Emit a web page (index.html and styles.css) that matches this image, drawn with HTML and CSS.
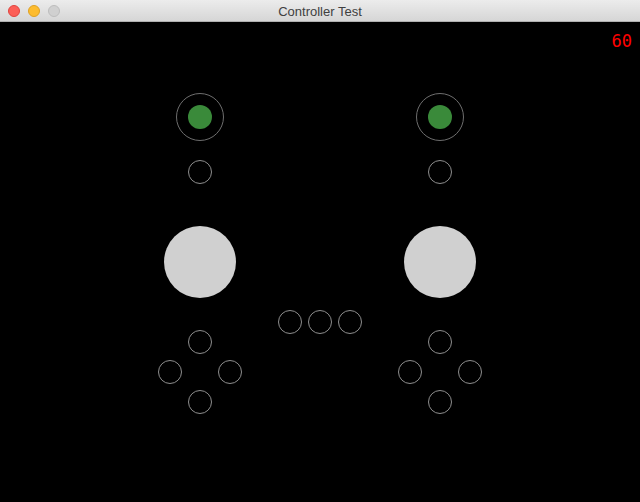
FILE: index.html
```html
<!DOCTYPE html>
<html>
<head>
<meta charset="utf-8">
<link rel="stylesheet" href="styles.css">
</head>
<body>
<div class="window">
  <div class="titlebar">
    <div class="lights">
      <span class="light red"></span>
      <span class="light yellow"></span>
      <span class="light grey"></span>
    </div>
    <div class="title">Controller Test</div>
  </div>
  <div class="canvas">
    <div class="fps">60</div>
    <svg class="pad" width="640" height="480" viewBox="0 0 640 480">
      <circle class="outer" cx="200" cy="95" r="23.5"/>
      <circle class="outer" cx="440" cy="95" r="23.5"/>
      <g class="ring">
        <circle cx="200" cy="150" r="11.5"/>
        <circle cx="440" cy="150" r="11.5"/>
        <circle cx="290" cy="300" r="11.5"/>
        <circle cx="320" cy="300" r="11.5"/>
        <circle cx="350" cy="300" r="11.5"/>
        <circle cx="200" cy="320" r="11.5"/>
        <circle cx="170" cy="350" r="11.5"/>
        <circle cx="230" cy="350" r="11.5"/>
        <circle cx="200" cy="380" r="11.5"/>
        <circle cx="440" cy="320" r="11.5"/>
        <circle cx="410" cy="350" r="11.5"/>
        <circle cx="470" cy="350" r="11.5"/>
        <circle cx="440" cy="380" r="11.5"/>
      </g>
      <circle class="stick" cx="200" cy="95" r="12"/>
      <circle class="stick" cx="440" cy="95" r="12"/>
      <circle class="trigger" cx="200" cy="240" r="36"/>
      <circle class="trigger" cx="440" cy="240" r="36"/>
    </svg>
  </div>
</div>
</body>
</html>
```

FILE: styles.css
```css
html, body {
  margin: 0;
  padding: 0;
  background: #000;
}
.window {
  width: 640px;
  height: 502px;
  display: flex;
  flex-direction: column;
}
.titlebar {
  height: 21px;
  flex: none;
  position: relative;
  background: linear-gradient(#ececec, #d6d6d6);
  border-bottom: 1px solid #b0b0b0;
  display: flex;
  align-items: center;
  justify-content: center;
}
.lights {
  position: absolute;
  left: 8px;
  top: 5px;
  display: flex;
  gap: 8px;
}
.light {
  width: 12px;
  height: 12px;
  border-radius: 50%;
  box-sizing: border-box;
}
.red { background: #fc5f57; border: 1px solid #e0443e; }
.yellow { background: #fdbc2e; border: 1px solid #dea123; }
.grey { background: #d0d0d0; border: 1px solid #bdbdbd; }
.title {
  font-family: "Liberation Sans", Arial, sans-serif;
  font-size: 13px;
  color: #404040;
  padding-top: 1px;
}
.canvas {
  flex: 1;
  position: relative;
  background: #000;
}
.pad {
  display: block;
}
.fps {
  position: absolute;
  right: 8px;
  top: 9px;
  font-family: "DejaVu Sans Mono", monospace;
  font-size: 17px;
  color: #ff0000;
  line-height: 20px;
}
.outer {
  fill: none;
  stroke: #6e6e6e;
  stroke-width: 1;
}
.ring circle {
  fill: none;
  stroke: #8e8e8e;
  stroke-width: 1;
}
.stick { fill: #3a8a3a; }
.trigger { fill: #d0d0d0; }
```
